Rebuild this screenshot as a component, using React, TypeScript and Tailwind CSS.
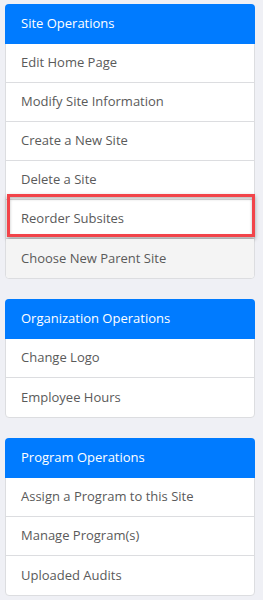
import React from "react";

type Section = {
  title: string;
  items: string[];
};

const sections: Section[] = [
  {
    title: "Site Operations",
    items: [
      "Edit Home Page",
      "Modify Site Information",
      "Create a New Site",
      "Delete a Site",
      "Reorder Subsites",
      "Choose New Parent Site",
    ],
  },
  {
    title: "Organization Operations",
    items: ["Change Logo", "Employee Hours"],
  },
  {
    title: "Program Operations",
    items: ["Assign a Program to this Site", "Manage Program(s)", "Uploaded Audits"],
  },
];

const OpsCard: React.FC<{ section: Section }> = ({ section }) => (
  <div className="rounded border border-[#dcdde0] bg-white">
    <div className="-mx-px -mt-px h-10 rounded-t bg-[#007bff] px-4 flex items-center text-[13px] text-white">
      {section.title}
    </div>
    {section.items.map((item, i) => {
      const last = i === section.items.length - 1;
      const highlighted = item === "Reorder Subsites";
      const hovered = item === "Choose New Parent Site";
      return (
        <div
          key={item}
          className={`relative h-[39px] px-[15px] flex items-center text-[13px] text-[#5a5a5a] ${
            last ? "rounded-b h-[38px]" : "border-b border-[#dcdde0]"
          } ${hovered ? "bg-[#f4f4f4]" : ""}`}
        >
          {item}
          {highlighted && (
            <div className="absolute left-px -right-px -top-[6px] h-[43px] border-[3px] border-[#f2444a] shadow-[0_2px_4px_rgba(0,0,0,0.35),inset_0_2px_3px_rgba(0,0,0,0.25)] pointer-events-none" />
          )}
        </div>
      );
    })}
  </div>
);

export default function App() {
  return (
    <div
      className="min-h-[600px] w-[263px] bg-[#eff0f5] pl-[5px] pr-[8px] pt-1 flex flex-col gap-5"
      style={{ fontFamily: '"Open Sans", "Noto Sans", sans-serif' }}
    >
      {sections.map((s) => (
        <OpsCard key={s.title} section={s} />
      ))}
    </div>
  );
}
